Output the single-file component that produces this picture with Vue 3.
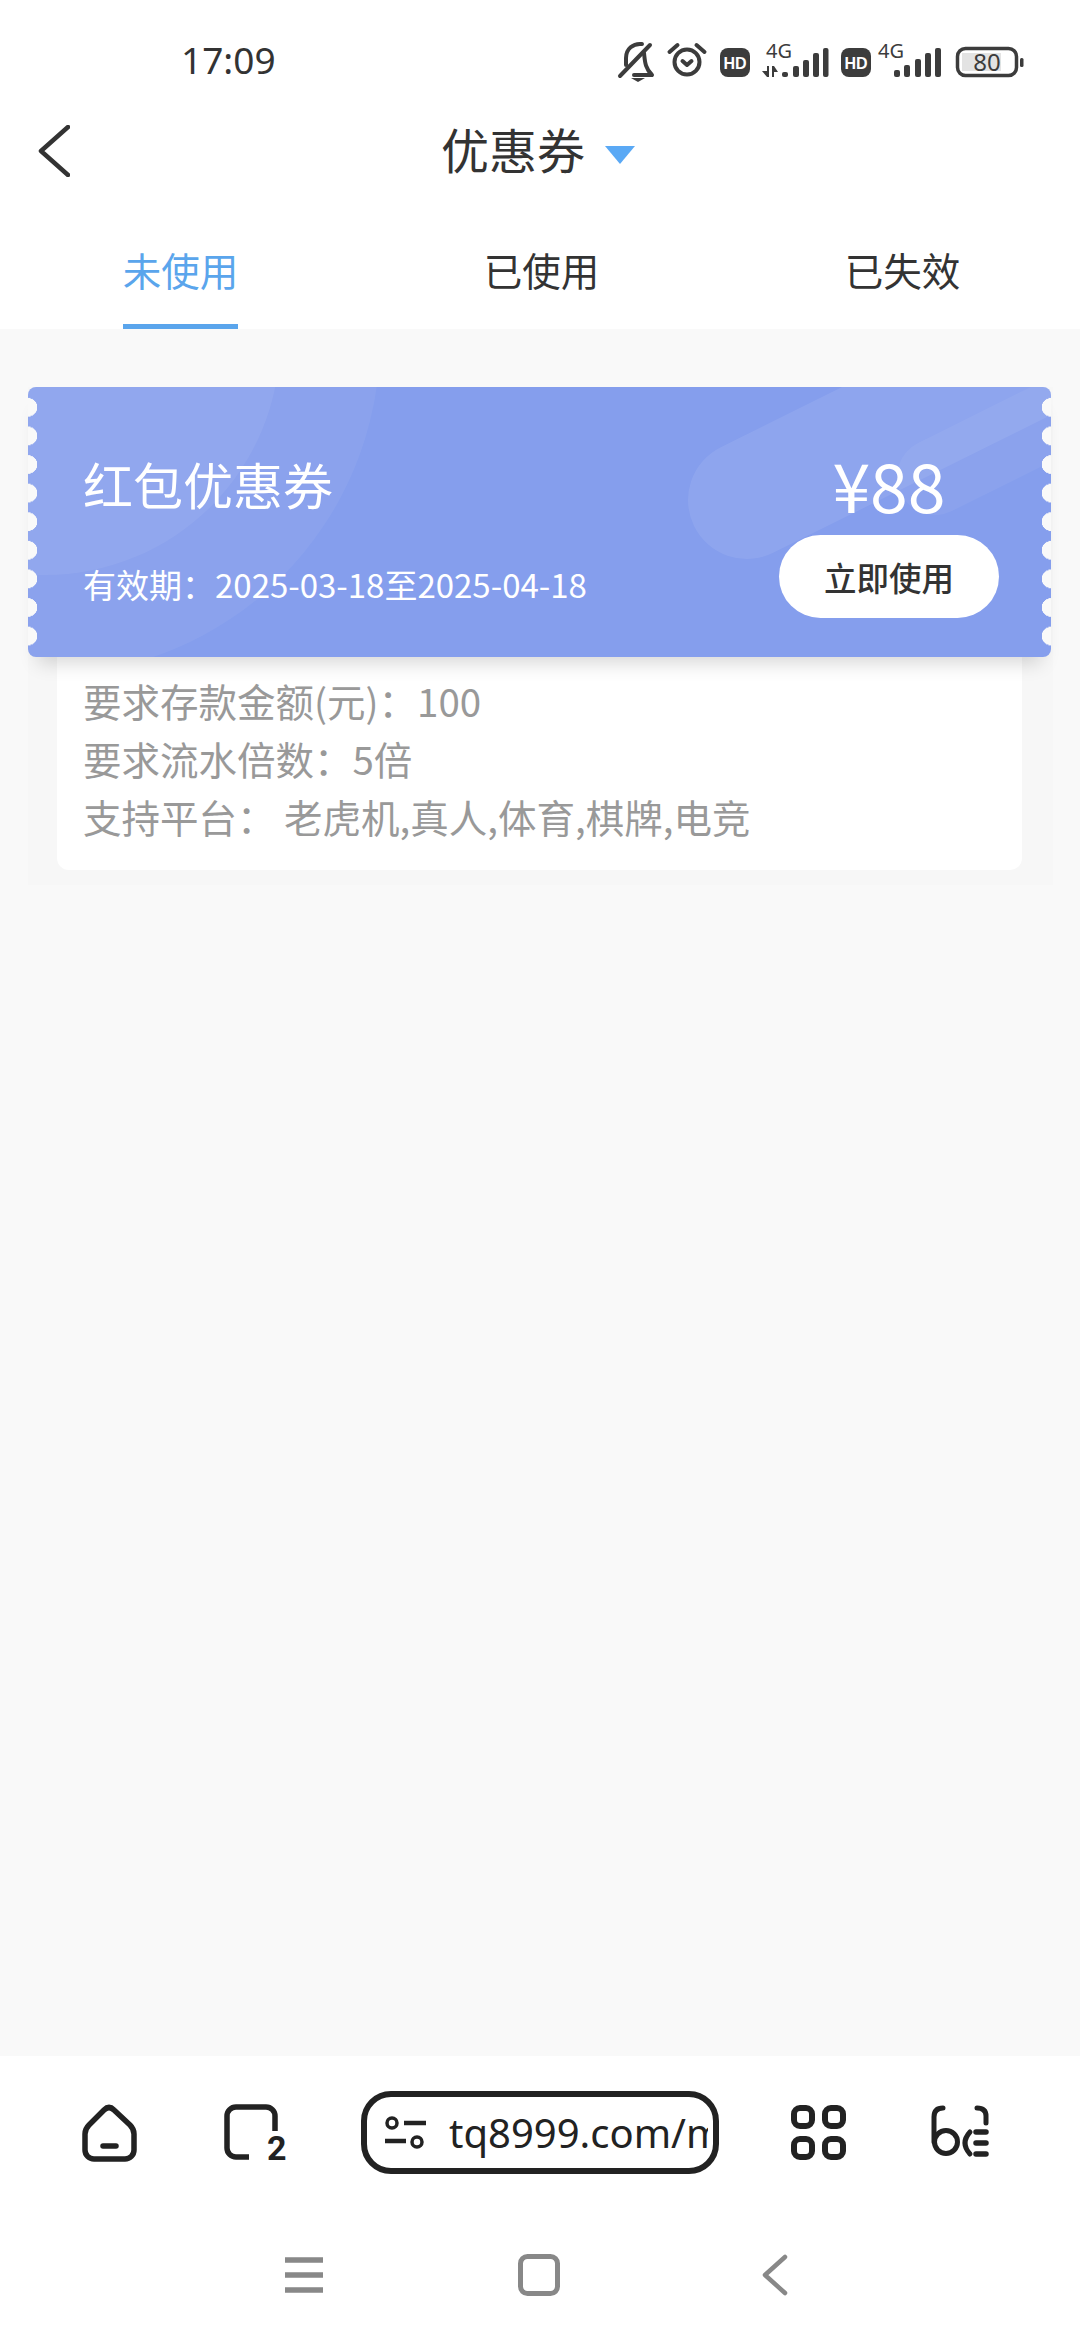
<script setup>
const tabs = [
  { label: '未使用', active: true },
  { label: '已使用', active: false },
  { label: '已失效', active: false },
]
// x, top, width of the signal bars, all end at y 77
const barsA = [[782, 72, 6], [793, 66, 6], [803, 60, 6], [813, 53, 6], [823, 48, 5.5]]
const barsB = [[894, 70, 6], [904, 65, 6], [915, 59, 6], [925, 53, 6], [935, 48, 6]]
</script>

<template>
  <div class="page">
    <header class="head">
      <div class="status">
        <span class="clock">17:09</span>
        <svg class="status-icons" width="440" height="50" viewBox="610 35 440 50">
          <g fill="none" stroke="#3c3c3c" stroke-width="4" stroke-linecap="round" stroke-linejoin="round">
            <path d="M626 65V58C626 49 633 43 642 44" />
            <path d="M644 53C645 62 645 68 652 75H634" />
            <path d="M620 76L650 45" />
            <circle cx="687" cy="62" r="12.5" />
            <path d="M682.5 61l4.5 4 4.5-4M669.5 52l8-7M704.5 52l-8-7" />
          </g>
          <path d="M631 78h14l-7 4z" fill="#3c3c3c" />
          <rect x="720" y="48" width="30" height="29" rx="8" fill="#3c3c3c" />
          <text x="735" y="68.5" class="hd">HD</text>
          <text x="766" y="58" class="net">4G</text>
          <path d="M769 66v11h-2l-5-6h5v-5zM772 77V66h2l4 6h-4v5z" fill="#3c3c3c" />
          <rect v-for="b in barsA" :key="b[0]" :x="b[0]" :y="b[1]" :width="b[2]" :height="77 - b[1]" rx="2" fill="#3c3c3c" />
          <rect x="841" y="48" width="30" height="29" rx="8" fill="#3c3c3c" />
          <text x="856" y="68.5" class="hd">HD</text>
          <text x="878" y="58" class="net">4G</text>
          <rect v-for="b in barsB" :key="b[0]" :x="b[0]" :y="b[1]" :width="b[2]" :height="77 - b[1]" rx="2" fill="#3c3c3c" />
          <rect x="962" y="53" width="39" height="18" fill="#e3e3e3" />
          <rect x="957.5" y="48.5" width="59" height="27" rx="8" fill="none" stroke="#3c3c3c" stroke-width="3.5" />
          <text x="987" y="71" class="batt">80</text>
          <rect x="1020" y="58" width="3.5" height="9" rx="1.5" fill="#3c3c3c" />
        </svg>
      </div>
      <div class="nav">
        <svg class="back" width="32" height="52" viewBox="0 0 32 52">
          <path d="M30 2L3 26l27 24" fill="none" stroke="#333" stroke-width="4.5" stroke-linecap="round" stroke-linejoin="round" />
        </svg>
        <h1 class="title">优惠券</h1>
        <span class="caret"></span>
      </div>
      <div class="tabs">
        <div v-for="t in tabs" :key="t.label" class="tab">
          <span class="tab-label" :class="{ on: t.active }">{{ t.label }}</span>
        </div>
      </div>
    </header>

    <main class="main">
      <section class="wrap">
        <div class="coupon">
          <svg class="decor" width="1023" height="270" viewBox="28 387 1023 270">
            <circle cx="45" cy="340" r="335" fill="#fff" fill-opacity="0.05" />
            <circle cx="45" cy="340" r="235" fill="#fff" fill-opacity="0.06" />
            <path d="M747 500L1110 320" stroke="#fff" stroke-opacity="0.08" stroke-width="118" stroke-linecap="round" />
            <path d="M935 477L1110 390" stroke="#fff" stroke-opacity="0.05" stroke-width="76" stroke-linecap="round" />
          </svg>
          <div class="coupon-left">
            <div class="coupon-name">红包优惠券</div>
            <div class="coupon-date">有效期：2025-03-18至2025-04-18</div>
          </div>
          <div class="coupon-right">
            <div class="price">¥88</div>
            <button class="use">立即使用</button>
          </div>
        </div>
        <div class="detail">
          <p>要求存款金额(元)：100</p>
          <p>要求流水倍数：5倍</p>
          <p>支持平台： 老虎机,真人,体育,棋牌,电竞</p>
        </div>
      </section>
    </main>

    <footer class="foot">
      <div class="toolbar">
        <svg class="ic-home" width="55" height="58" viewBox="0 0 55 58">
          <path d="M22 6Q27 1 32 6L48 21Q52 25 52 30V46A9 9 0 0 1 43 55H12A9 9 0 0 1 3 46V30Q3 25 7 21Z" fill="none" stroke="#222" stroke-width="5.5" stroke-linejoin="round" />
          <path d="M21 42h13" stroke="#222" stroke-width="5.5" stroke-linecap="round" />
        </svg>
        <svg class="ic-tabs" width="64" height="58" viewBox="0 0 64 58">
          <path d="M25 53H12a9 9 0 0 1-9-9V12a9 9 0 0 1 9-9h30a9 9 0 0 1 9 9v15" fill="none" stroke="#222" stroke-width="5.5" />
          <text x="43" y="56" class="tab-count">2</text>
        </svg>
        <div class="url">
          <svg width="43" height="34" viewBox="0 0 43 34">
            <circle cx="8" cy="7" r="5" fill="none" stroke="#222" stroke-width="3.5" />
            <circle cx="33" cy="26" r="5" fill="none" stroke="#222" stroke-width="3.5" />
            <path d="M20 7h22M1 25h21" stroke="#222" stroke-width="4.5" />
          </svg>
          <span class="url-text">tq8999.com/m</span>
        </div>
        <svg class="ic-grid" width="55" height="55" viewBox="0 0 55 55">
          <g fill="none" stroke="#222" stroke-width="6">
            <rect x="3" y="3" width="18" height="18" rx="6" />
            <rect x="34" y="3" width="18" height="18" rx="6" />
            <rect x="3" y="34" width="18" height="18" rx="6" />
            <rect x="34" y="34" width="18" height="18" rx="6" />
          </g>
        </svg>
        <svg class="ic-last" width="58" height="55" viewBox="0 0 58 55">
          <g fill="none" stroke="#222" stroke-width="5" stroke-linecap="round">
            <path d="M12 3C6 3 3 6 3 12V37" />
            <circle cx="15" cy="37" r="11.5" />
            <path d="M39 27Q29 38 39 49" />
            <path d="M46 3C52 3 55 6 55 11V18" />
          </g>
          <g stroke="#222" stroke-width="5.5" stroke-linecap="round">
            <path d="M45 27h10M45 38h10M45 49h10" />
          </g>
        </svg>
      </div>
      <div class="sysnav">
        <svg width="40" height="38" viewBox="0 0 40 38">
          <path d="M1 4h38M1 19h38M1 34h38" stroke="#888" stroke-width="5.5" />
        </svg>
        <svg width="42" height="42" viewBox="0 0 42 42">
          <rect x="2.5" y="2.5" width="37" height="37" rx="7" fill="none" stroke="#888" stroke-width="5" />
        </svg>
        <svg width="26" height="42" viewBox="0 0 26 42">
          <path d="M23 3L3 21l20 18" fill="none" stroke="#888" stroke-width="4.5" stroke-linecap="round" stroke-linejoin="round" />
        </svg>
      </div>
    </footer>
  </div>
</template>

<style scoped>
.page {
  display: flex;
  flex-direction: column;
  width: 1080px;
  height: 2340px;
  background: #f9f9f9;
  font-family: "Noto Sans CJK SC", sans-serif;
  overflow: hidden;
}
.head {
  background: #fff;
}
.status {
  display: flex;
  align-items: flex-start;
  justify-content: space-between;
  height: 104px;
  padding: 35px 30px 0 181px;
  box-sizing: border-box;
}
.clock {
  font-family: "Noto Sans", sans-serif;
  font-size: 37px;
  line-height: 50px;
  color: #333;
}
.nav {
  position: relative;
  display: flex;
  align-items: center;
  justify-content: center;
  height: 96px;
  padding-right: 4px;
}
.back {
  position: absolute;
  left: 38px;
  top: 21px;
}
.title {
  margin: 0 20px 8px 0;
  font-size: 48px;
  font-weight: 400;
  color: #333;
  line-height: 64px;
}
.caret {
  width: 0;
  height: 0;
  margin-top: 6px;
  border-left: 15px solid transparent;
  border-right: 15px solid transparent;
  border-top: 18px solid #5aa9f5;
}
.tabs {
  display: flex;
  padding-top: 40px;
}
.tab {
  flex: none;
  width: 361px;
  display: flex;
  justify-content: center;
  height: 89px;
}
.tab-label {
  height: 84px;
  font-size: 38.5px;
  line-height: 58px;
  color: #333;
}
.tab-label.on {
  color: #5aa5ec;
  border-bottom: 5px solid #5aa5ec;
}
.main {
  flex: 1;
  padding: 58px 27px 0 28px;
}
.wrap {
  background: #f7f7f7;
  padding-bottom: 15px;
}
.coupon {
  position: relative;
  display: flex;
  justify-content: space-between;
  width: 1023px;
  height: 270px;
  border-radius: 8px;
  background: #859eed;
  box-shadow: 0 16px 18px -10px rgba(0, 0, 0, 0.16);
  overflow: hidden;
}
.coupon::before,
.coupon::after {
  content: "";
  position: absolute;
  top: 6px;
  bottom: 6px;
  width: 10px;
  background-size: 10px 28.6px;
  background-repeat: repeat-y;
}
.coupon::before {
  left: 0;
  background-image: radial-gradient(circle at 0 14.3px, #f9f9f9 9px, transparent 9.5px);
}
.coupon::after {
  right: 0;
  background-image: radial-gradient(circle at 10px 14.3px, #f9f9f9 9px, transparent 9.5px);
}
.decor {
  position: absolute;
  left: 0;
  top: 0;
}
.coupon-left {
  position: relative;
  padding: 62px 0 0 55px;
}
.coupon-name {
  font-size: 50px;
  line-height: 68px;
  color: #fff;
}
.coupon-date {
  margin-top: 45px;
  font-size: 33px;
  line-height: 44px;
  color: #fff;
}
.coupon-right {
  position: relative;
  display: flex;
  flex-direction: column;
  align-items: center;
  width: 220px;
  margin-right: 52px;
  padding-top: 49px;
}
.price {
  height: 99px;
  font-size: 68px;
  line-height: 96px;
  color: #fff;
}
.use {
  width: 220px;
  height: 83px;
  border: 0;
  border-radius: 42px;
  background: #fff;
  padding: 0;
  font-family: inherit;
  font-size: 32.5px;
  font-weight: 500;
  color: #333;
}
.detail {
  margin: 0 31px 0 29px;
  padding: 13.5px 18px 25.5px 26px;
  background: #fff;
  border-radius: 0 0 12px 12px;
}
.detail p {
  margin: 0;
  font-size: 38.5px;
  line-height: 58px;
  color: #999;
  white-space: pre;
}
.foot {
  height: 284px;
  background: #fff;
}
.toolbar {
  display: flex;
  align-items: center;
  height: 118px;
  box-sizing: border-box;
  padding: 35px 0 0 82px;
}
.ic-tabs {
  margin-left: 87px;
}
.url {
  display: flex;
  align-items: center;
  flex: none;
  width: 358px;
  height: 83px;
  box-sizing: border-box;
  margin-left: 73px;
  padding: 0 5px 0 17px;
  border: 6px solid #222;
  border-radius: 30px;
  overflow: hidden;
  white-space: nowrap;
}
.url svg {
  flex: none;
}
.url-text {
  margin-left: 22px;
  font-family: "Noto Sans", sans-serif;
  font-size: 40px;
  color: #222;
  overflow: hidden;
}
.ic-grid {
  margin-left: 72px;
}
.ic-last {
  margin-left: 85px;
}
.sysnav {
  display: flex;
  align-items: center;
  padding: 80px 0 0 284px;
}
.sysnav svg:nth-child(2) {
  margin-left: 194px;
}
.sysnav svg:nth-child(3) {
  margin-left: 202px;
}
.hd {
  font-family: "Liberation Sans", sans-serif;
  font-size: 16px;
  font-weight: 700;
  fill: #fff;
  text-anchor: middle;
}
.net {
  font-family: "Noto Sans", sans-serif;
  font-size: 20px;
  fill: #3c3c3c;
}
.batt {
  font-family: "Noto Sans", sans-serif;
  font-size: 24px;
  fill: #3c3c3c;
  text-anchor: middle;
}
.tab-count {
  font-family: "Roboto", sans-serif;
  font-size: 34px;
  font-weight: 700;
  fill: #222;
}
</style>
